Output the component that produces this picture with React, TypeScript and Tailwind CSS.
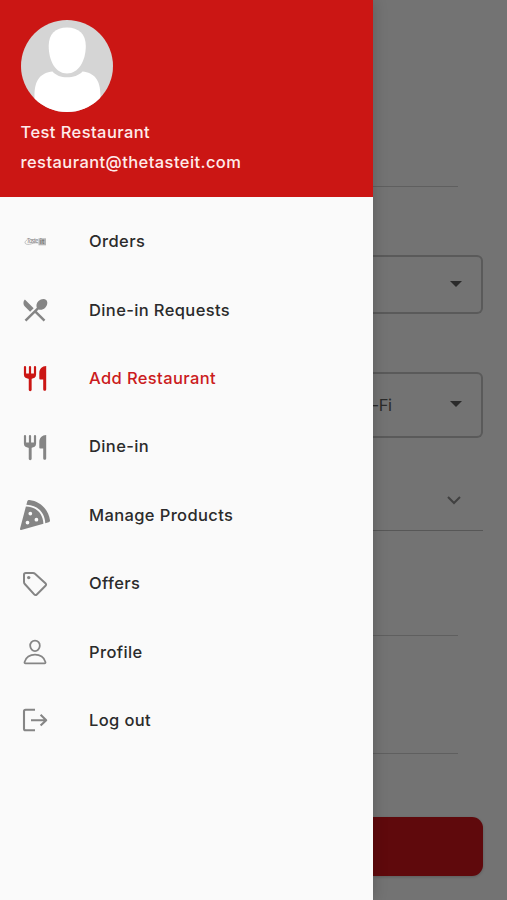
import { ReactNode } from "react";
import { FaPizzaSlice } from "react-icons/fa";
import { IoPersonOutline } from "react-icons/io5";
import { MdRestaurantMenu } from "react-icons/md";

function Cutlery() {
  return (
    <svg width="30" height="30" viewBox="0 0 30 30" fill="none" stroke="currentColor" strokeLinecap="round">
      <path d="M5 4v7.5c0 2.5 2 3.3 5 3.3s5-.8 5-3.3V4M10 4v10" strokeWidth="2.2" />
      <path d="M10.2 14v12.8" strokeWidth="2.9" />
      <path d="M26.2 3v23.2c0 2.2-3 2.2-3 0V16.5h-2.6c-.9 0-1.3-.4-1.3-1.3V10c0-3.8 2.8-7 6.9-7Z" fill="currentColor" stroke="none" />
      <path d="M4.6 10.5h10.8c0 3-2.2 4.8-5.4 4.8s-5.4-1.8-5.4-4.8Z" fill="currentColor" stroke="none" />
    </svg>
  );
}

function BrandMark() {
  return (
    <svg width="30" height="30" viewBox="0 0 30 30" fill="none" stroke="#a8a8a8">
      <path d="M7.500 12.500c-4 2.500-3 5.500 2 4.800 3-.5 5-2 9-1.300" strokeWidth=".7" />
      <rect x="18.5" y="11.3" width="7.500" height="7" fill="#b5b5b5" stroke="none" />
      <text x="6.500" y="16" fontSize="5.500" fontStyle="italic" fill="#8c8c8c" stroke="none" textLength="12">Taste</text>
      <text x="20" y="17.2" fontSize="6.500" fontWeight="600" fill="#777" stroke="none">it</text>
    </svg>
  );
}

function Tag() {
  return (
    <svg width="30" height="30" viewBox="0 0 30 30" fill="none" stroke="currentColor" strokeWidth="2" strokeLinejoin="round">
      <path d="M5.8 4H13c.8 0 1.400.2 2 .8l10.400 9.400c.9.8.9 1.800.1 2.600l-8.700 8.700c-.8.8-1.800.8-2.600-.1L4.800 15c-.6-.6-.8-1.200-.8-2V5.800C4 4.600 4.600 4 5.800 4Z" />
      <circle cx="8.700" cy="8.600" r="1.700" fill="currentColor" stroke="none" />
    </svg>
  );
}

function Logout() {
  return (
    <svg width="30" height="30" viewBox="0 0 30 30" fill="none" stroke="currentColor" strokeWidth="2.1" strokeLinejoin="round">
      <path d="M15 4.8H5.500c-1 0-1.500.5-1.500 1.500v17.400c0 1 .5 1.500 1.500 1.500H15M11 15.200h15M20.600 9.800l5.600 5.400-5.600 5.400" />
    </svg>
  );
}

function Avatar() {
  return (
    <svg className="block" width="92" height="92" viewBox="0 0 92 92">
      <defs>
        <clipPath id="avatar-clip"><circle cx="46" cy="46" r="46" /></clipPath>
      </defs>
      <g clipPath="url(#avatar-clip)">
        <path fill="#d5d5d5" d="M0 0h92v92H0z" />
        <path fill="#fff" d="M46 7.5c11.5 0 18.800 6.5 18.800 18.5 0 15-7.500 27.5-18.800 27.5S27.700 41 27.700 26C27.700 14 34.500 7.5 46 7.5Z" />
        <path fill="#fff" d="M31.5 51.5C35 55.500 40 57.3 46 57.3S58 55.500 61.5 51.5C73 53 79.500 59 79.500 76v16h-66V76c0-17 6.500-23 18-24.500Z" />
      </g>
    </svg>
  );
}

const items: { label: string; icon: ReactNode; active?: boolean }[] = [
  { label: "Orders", icon: <BrandMark /> },
  { label: "Dine-in Requests", icon: <MdRestaurantMenu size={30} /> },
  { label: "Add Restaurant", icon: <Cutlery />, active: true },
  { label: "Dine-in", icon: <Cutlery /> },
  { label: "Manage Products", icon: <FaPizzaSlice size={30} /> },
  { label: "Offers", icon: <Tag /> },
  { label: "Profile", icon: <IoPersonOutline size={28} className="mx-px" /> },
  { label: "Log out", icon: <Logout /> },
];

function Caret() {
  return (
    <svg width="12" height="6" viewBox="0 0 12 6" className="mb-0.5 fill-[#2b2b2b]">
      <path d="M0 0h12L6 6Z" />
    </svg>
  );
}

export default function App() {
  return (
    <div className="flex h-[900px] w-[507px] overflow-hidden bg-[#737373] font-['Inter','Liberation_Sans',sans-serif]">
      <aside className="z-10 flex w-[372.5px] shrink-0 flex-col bg-[#fafafa] shadow-[0_0_14px_rgba(0,0,0,0.2)]">
        <header className="flex h-[197px] shrink-0 flex-col bg-[#cb1614] pl-[20.5px] pt-5 text-[16.5px] font-medium text-[#ffebeb]">
          <Avatar />
          <p className="mt-[5px] h-[30px] leading-[30px] tracking-[0.42px]">Test Restaurant</p>
          <p className="h-[31px] leading-[31px] tracking-[0.42px]">restaurant@thetasteit.com</p>
        </header>
        <nav className="flex flex-col pt-[10.4px]">
          {items.map((item) => (
            <a
              key={item.label}
              className={`flex h-[68.4px] items-center gap-[39px] pl-5 text-[16.5px] font-medium tracking-[0.38px] ${item.active ? "text-[#cb1b20]" : "text-[#2b2b2b]"}`}
            >
              <span className={`flex w-[30px] ${item.active ? "text-[#cb1614]" : "text-[#858585]"}`}>{item.icon}</span>
              {item.label}
            </a>
          ))}
        </nav>
      </aside>
      <main className="flex flex-1 flex-col pr-[24.5px]">
        <div className="mr-[25px] h-[187px] shrink-0 border-b border-[#5f5f5f]" />
        <div className="mt-[68px] flex h-[59px] shrink-0 items-center justify-end rounded-r-[6px] border-2 border-l-0 border-[#5a5a5a] pr-[19px]">
          <Caret />
        </div>
        <div className="mt-[58px] flex h-[66px] shrink-0 items-center justify-between rounded-r-[6px] border-2 border-l-0 border-[#5a5a5a] pr-[19px]">
          <span className="-ml-px text-[16.5px] tracking-[-0.4px] text-[#2b2b2b]">-Fi</span>
          <Caret />
        </div>
        <div className="flex h-[93px] shrink-0 items-end justify-end border-b border-[#575757] pb-[25px] pr-[22px]">
          <svg width="14" height="9" viewBox="0 0 14 9" fill="none" stroke="#404040" strokeWidth="2">
            <path d="m1 1 6 6 6-6" />
          </svg>
        </div>
        <div className="mr-[25px] h-[105px] shrink-0 border-b border-[#5f5f5f]" />
        <div className="mr-[25px] h-[118px] shrink-0 border-b border-[#5f5f5f]" />
        <button className="mt-[63px] h-[59px] shrink-0 rounded-r-[11px] bg-[#5f090c] shadow-[0_1px_3px_rgba(0,0,0,0.2)]" aria-label="Submit" />
      </main>
    </div>
  );
}
